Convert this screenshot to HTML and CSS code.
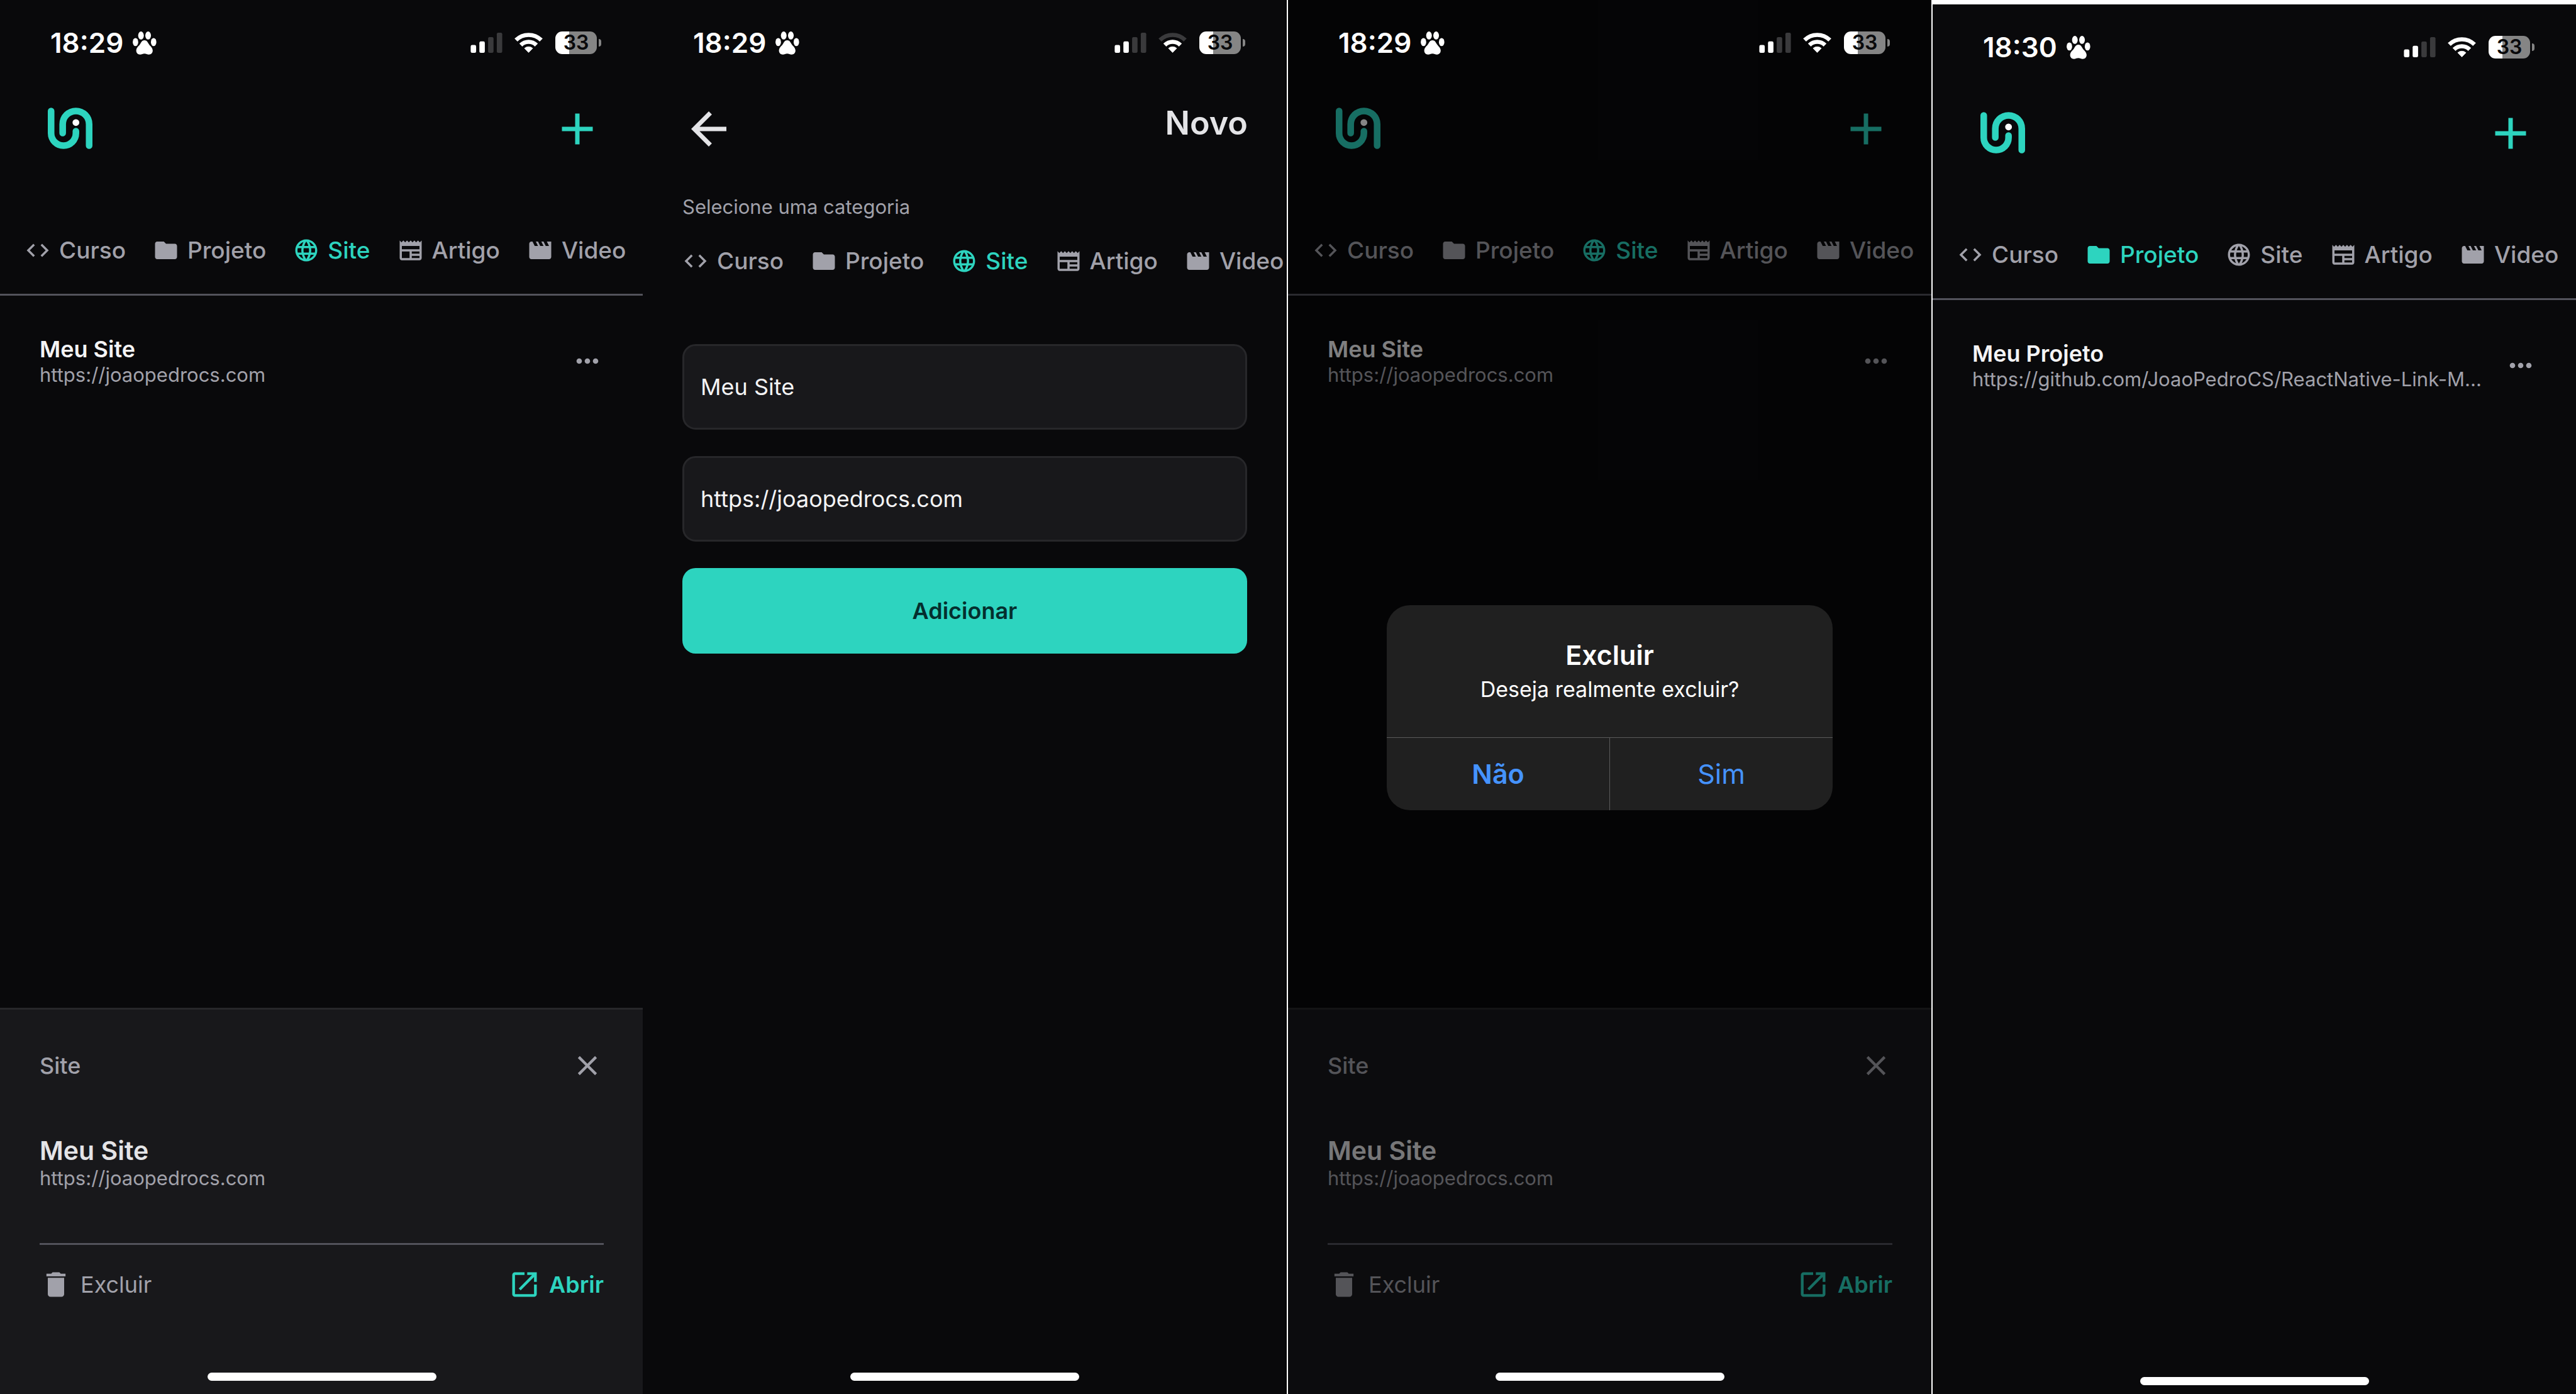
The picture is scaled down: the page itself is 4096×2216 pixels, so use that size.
FILE: index.html
```html
<!DOCTYPE html>
<html lang="pt-BR">
<head>
<meta charset="utf-8">
<meta name="viewport" content="width=device-width, initial-scale=1">
<title>Links</title>
<link rel="stylesheet" href="styles.css">
</head>
<body>
<svg class="sprite" aria-hidden="true">
  <symbol id="paw" viewBox="489 82 130 127">
    <ellipse cx="504" cy="140" rx="15" ry="22"/>
    <ellipse cx="534" cy="104" rx="15.5" ry="22"/>
    <ellipse cx="573" cy="104" rx="15.5" ry="22"/>
    <ellipse cx="603" cy="140" rx="15" ry="22"/>
    <path d="M553 130c-12 0-18 10-23 20-5 10-21 18-22 36 0 14 9 22 21 22 9 0 15-5 24-5s15 5 24 5c12 0 21-8 21-22-1-18-17-26-22-36-5-10-11-20-23-20z"/>
  </symbol>
  <symbol id="signal" viewBox="0 0 174 111">
    <rect y="68" width="30" height="43" rx="8"/>
    <rect x="48" y="48" width="30" height="63" rx="8"/>
    <rect x="96" y="24" width="30" height="87" rx="8" fill="#3a3a3c"/>
    <rect x="144" width="30" height="111" rx="8" fill="#3a3a3c"/>
  </symbol>
  <symbol id="wifi-inner" viewBox="348 87 153 111">
    <path d="M381.500 155A61 61 0 0 1 467.500 155" fill="none" stroke="currentColor" stroke-width="23"/>
    <path d="M424.500 196L402 173A34 34 0 0 1 447 173z" stroke="currentColor" stroke-width="3" stroke-linejoin="round"/>
  </symbol>
  <symbol id="wifi-outer" viewBox="348 87 153 111">
    <path d="M355 127.500A99 99 0 0 1 494 127.500" fill="none" stroke="currentColor" stroke-width="23"/>
  </symbol>
  <symbol id="logo" viewBox="81 75 243 225">
    <g fill="none" stroke="#2dd4bf" stroke-width="36" stroke-linecap="round">
      <path d="M99 93V214A67.500 67.500 0 0 0 234 214V203"/>
      <path d="M162 213V165A72 72 0 0 1 306 165V282"/>
    </g>
    <circle cx="234" cy="156" r="18.500" fill="#fff"/>
  </symbol>
  <symbol id="add" viewBox="0 0 24 24"><path d="M19 13h-6v6h-2v-6H5v-2h6V5h2v6h6v2z"/></symbol>
  <symbol id="back" viewBox="0 0 24 24"><path d="M20 11H7.830l5.590-5.590L12 4l-8 8 8 8 1.410-1.410L7.830 13H20v-2z"/></symbol>
  <symbol id="close" viewBox="0 0 24 24"><path d="M19 6.410L17.590 5 12 10.590 6.410 5 5 6.410 10.590 12 5 17.590 6.410 19 12 13.410 17.590 19 19 17.590 13.410 12z"/></symbol>
  <symbol id="more" viewBox="0 0 24 24"><path d="M6 10c-1.100 0-2 .9-2 2s.9 2 2 2 2-.9 2-2-.9-2-2-2zm12 0c-1.100 0-2 .9-2 2s.9 2 2 2 2-.9 2-2-.9-2-2-2zm-6 0c-1.100 0-2 .9-2 2s.9 2 2 2 2-.9 2-2-.9-2-2-2z"/></symbol>
  <symbol id="code" viewBox="0 0 24 24"><path d="M9.400 16.600L4.800 12l4.600-4.600L8 6l-6 6 6 6 1.400-1.400zm5.200 0l4.600-4.600-4.600-4.600L16 6l6 6-6 6-1.400-1.400z"/></symbol>
  <symbol id="folder" viewBox="0 0 24 24"><path d="M10 4H4c-1.100 0-1.990.9-1.990 2L2 18c0 1.100.9 2 2 2h16c1.100 0 2-.9 2-2V8c0-1.100-.9-2-2-2h-8l-2-2z"/></symbol>
  <symbol id="globe" viewBox="0 0 24 24"><path d="M11.990 2C6.470 2 2 6.480 2 12s4.470 10 9.990 10C17.520 22 22 17.520 22 12S17.520 2 11.990 2zm6.930 6h-2.950c-.32-1.250-.78-2.450-1.380-3.560 1.840.63 3.370 1.910 4.330 3.560zM12 4.040c.83 1.200 1.480 2.530 1.910 3.960h-3.820c.43-1.430 1.080-2.760 1.910-3.960zM4.260 14C4.100 13.360 4 12.690 4 12s.1-1.360.26-2h3.380c-.08.66-.14 1.320-.14 2 0 .68.06 1.340.14 2H4.260zm.82 2h2.950c.32 1.250.78 2.450 1.380 3.560-1.840-.63-3.370-1.900-4.330-3.560zm2.950-8H5.080c.96-1.660 2.490-2.930 4.330-3.560C8.810 5.550 8.350 6.750 8.030 8zM12 19.960c-.83-1.200-1.480-2.530-1.910-3.960h3.820c-.43 1.430-1.080 2.760-1.910 3.960zM14.340 14H9.660c-.09-.66-.16-1.320-.16-2 0-.68.07-1.350.16-2h4.680c.09.65.16 1.320.16 2 0 .68-.07 1.340-.16 2zm.25 5.560c.6-1.110 1.060-2.310 1.380-3.560h2.950c-.96 1.650-2.490 2.930-4.330 3.560zM16.360 14c.08-.66.14-1.320.14-2 0-.68-.06-1.340-.14-2h3.380c.16.64.26 1.310.26 2s-.1 1.360-.26 2h-3.380z"/></symbol>
  <symbol id="news" viewBox="0 0 24 24"><path d="M22 3l-1.670 1.670L18.670 3 17 4.670 15.330 3l-1.660 1.670L12 3l-1.670 1.670L8.670 3 7 4.670 5.330 3 3.670 4.670 2 3v16c0 1.100.9 2 2 2h16c1.100 0 2-.9 2-2V3zM11 19H4v-6h7v6zm9 0h-7v-2h7v2zm0-4h-7v-2h7v2zm0-4H4V8h16v3z"/></symbol>
  <symbol id="movie" viewBox="0 0 24 24"><path d="M18 4l2 4h-3l-2-4h-2l2 4h-3l-2-4H8l2 4H7L5 4H4c-1.100 0-1.990.9-1.990 2L2 18c0 1.100.9 2 2 2h16c1.100 0 2-.9 2-2V4h-4z"/></symbol>
  <symbol id="trash" viewBox="0 0 24 24"><path d="M6 19c0 1.100.9 2 2 2h8c1.100 0 2-.9 2-2V7H6v12zM19 4h-3.500l-1-1h-5l-1 1H5v2h14V4z"/></symbol>
  <symbol id="launch" viewBox="0 0 24 24"><path d="M19 19H5V5h7V3H5c-1.110 0-2 .9-2 2v14c0 1.100.89 2 2 2h14c1.100 0 2-.9 2-2v-7h-2v7zM14 3v2h3.590l-9.830 9.830 1.410 1.410L19 6.410V10h2V3h-7z"/></symbol>
</svg>

<main class="screens">
  <section class="screen">
    <div class="status">
      <time class="clock">18:29</time>
      <svg class="paw"><use href="#paw"/></svg>
      <svg class="signal"><use href="#signal"/></svg>
      <svg class="wifi"><use href="#wifi-inner"/><use href="#wifi-outer"/></svg>
      <span class="battery">33</span>
    </div>
    <header class="header">
      <svg class="logo"><use href="#logo"/></svg>
      <button class="icon-button accent" aria-label="Novo"><svg class="icon-large"><use href="#add"/></svg></button>
    </header>
    <nav class="tabs tabs-ruled">
      <button class="tab"><svg class="icon-small"><use href="#code"/></svg>Curso</button>
      <button class="tab"><svg class="icon-small"><use href="#folder"/></svg>Projeto</button>
      <button class="tab accent"><svg class="icon-small"><use href="#globe"/></svg>Site</button>
      <button class="tab"><svg class="icon-small"><use href="#news"/></svg>Artigo</button>
      <button class="tab"><svg class="icon-small"><use href="#movie"/></svg>Video</button>
    </nav>
    <article class="link">
      <div class="link-text">
        <h2 class="link-name">Meu Site</h2>
        <p class="link-url">https://joaopedrocs.com</p>
      </div>
      <button class="icon-button" aria-label="Mais"><svg class="icon"><use href="#more"/></svg></button>
    </article>
    <aside class="sheet">
      <div class="sheet-head">
        <span class="sheet-category">Site</span>
        <button class="icon-button" aria-label="Fechar"><svg class="icon"><use href="#close"/></svg></button>
      </div>
      <h2 class="sheet-name">Meu Site</h2>
      <p class="link-url">https://joaopedrocs.com</p>
      <div class="sheet-actions">
        <button class="action"><svg class="icon"><use href="#trash"/></svg>Excluir</button>
        <button class="action action-open accent"><svg class="icon"><use href="#launch"/></svg>Abrir</button>
      </div>
      <div class="home"></div>
    </aside>
  </section>

  <section class="screen screen-edge">
    <div class="status">
      <time class="clock">18:29</time>
      <svg class="paw"><use href="#paw"/></svg>
      <svg class="signal"><use href="#signal"/></svg>
      <svg class="wifi"><use href="#wifi-inner"/><use class="wifi-weak" href="#wifi-outer"/></svg>
      <span class="battery">33</span>
    </div>
    <header class="header header-form">
      <button class="icon-button light" aria-label="Voltar"><svg class="icon-large"><use href="#back"/></svg></button>
      <h1 class="title">Novo</h1>
    </header>
    <p class="hint">Selecione uma categoria</p>
    <nav class="tabs tabs-form">
      <button class="tab"><svg class="icon-small"><use href="#code"/></svg>Curso</button>
      <button class="tab"><svg class="icon-small"><use href="#folder"/></svg>Projeto</button>
      <button class="tab accent"><svg class="icon-small"><use href="#globe"/></svg>Site</button>
      <button class="tab"><svg class="icon-small"><use href="#news"/></svg>Artigo</button>
      <button class="tab"><svg class="icon-small"><use href="#movie"/></svg>Video</button>
    </nav>
    <form class="form">
      <input class="field" type="text" aria-label="Nome" value="Meu Site">
      <input class="field" type="text" aria-label="URL" value="https://joaopedrocs.com">
      <button class="submit" type="button">Adicionar</button>
    </form>
    <div class="home"></div>
  </section>

  <section class="screen screen-edge">
    <div class="status">
      <time class="clock">18:29</time>
      <svg class="paw"><use href="#paw"/></svg>
      <svg class="signal"><use href="#signal"/></svg>
      <svg class="wifi"><use href="#wifi-inner"/><use href="#wifi-outer"/></svg>
      <span class="battery">33</span>
    </div>
    <header class="header">
      <svg class="logo"><use href="#logo"/></svg>
      <button class="icon-button accent" aria-label="Novo"><svg class="icon-large"><use href="#add"/></svg></button>
    </header>
    <nav class="tabs tabs-ruled">
      <button class="tab"><svg class="icon-small"><use href="#code"/></svg>Curso</button>
      <button class="tab"><svg class="icon-small"><use href="#folder"/></svg>Projeto</button>
      <button class="tab accent"><svg class="icon-small"><use href="#globe"/></svg>Site</button>
      <button class="tab"><svg class="icon-small"><use href="#news"/></svg>Artigo</button>
      <button class="tab"><svg class="icon-small"><use href="#movie"/></svg>Video</button>
    </nav>
    <article class="link">
      <div class="link-text">
        <h2 class="link-name">Meu Site</h2>
        <p class="link-url">https://joaopedrocs.com</p>
      </div>
      <button class="icon-button" aria-label="Mais"><svg class="icon"><use href="#more"/></svg></button>
    </article>
    <aside class="sheet">
      <div class="sheet-head">
        <span class="sheet-category">Site</span>
        <button class="icon-button" aria-label="Fechar"><svg class="icon"><use href="#close"/></svg></button>
      </div>
      <h2 class="sheet-name">Meu Site</h2>
      <p class="link-url">https://joaopedrocs.com</p>
      <div class="sheet-actions">
        <button class="action"><svg class="icon"><use href="#trash"/></svg>Excluir</button>
        <button class="action action-open accent"><svg class="icon"><use href="#launch"/></svg>Abrir</button>
      </div>
      <div class="home"></div>
    </aside>
    <div class="overlay">
      <div class="alert" role="alertdialog" aria-labelledby="alert-title" aria-describedby="alert-text">
        <div class="alert-body">
          <h2 class="alert-title" id="alert-title">Excluir</h2>
          <p class="alert-text" id="alert-text">Deseja realmente excluir?</p>
        </div>
        <div class="alert-actions">
          <button class="alert-button alert-default">Não</button>
          <button class="alert-button">Sim</button>
        </div>
      </div>
    </div>
  </section>

  <section class="screen screen-capped">
    <div class="status">
      <time class="clock">18:30</time>
      <svg class="paw"><use href="#paw"/></svg>
      <svg class="signal"><use href="#signal"/></svg>
      <svg class="wifi"><use href="#wifi-inner"/><use href="#wifi-outer"/></svg>
      <span class="battery">33</span>
    </div>
    <header class="header">
      <svg class="logo"><use href="#logo"/></svg>
      <button class="icon-button accent" aria-label="Novo"><svg class="icon-large"><use href="#add"/></svg></button>
    </header>
    <nav class="tabs tabs-ruled">
      <button class="tab"><svg class="icon-small"><use href="#code"/></svg>Curso</button>
      <button class="tab accent"><svg class="icon-small"><use href="#folder"/></svg>Projeto</button>
      <button class="tab"><svg class="icon-small"><use href="#globe"/></svg>Site</button>
      <button class="tab"><svg class="icon-small"><use href="#news"/></svg>Artigo</button>
      <button class="tab"><svg class="icon-small"><use href="#movie"/></svg>Video</button>
    </nav>
    <article class="link">
      <div class="link-text">
        <h2 class="link-name">Meu Projeto</h2>
        <p class="link-url">https://github.com/JoaoPedroCS/ReactNative-Link-M...</p>
      </div>
      <button class="icon-button" aria-label="Mais"><svg class="icon"><use href="#more"/></svg></button>
    </article>
    <div class="home"></div>
  </section>
</main>
</body>
</html>
```
FILE: styles.css
```css
* {
  box-sizing: border-box;
  margin: 0;
}

body {
  background: #09090b;
  color: #a1a1aa;
  font-family: Inter, "Liberation Sans", sans-serif;
}

button {
  padding: 0;
  border: 0;
  background: none;
  color: inherit;
  font: inherit;
}

svg {
  display: block;
  flex: none;
  fill: currentColor;
}

.sprite {
  position: absolute;
  width: 0;
  height: 0;
}

.screens {
  display: grid;
  grid-template-columns: 1022fr 1026fr 1025fr 1023fr;
  min-height: 100vh;
}

.screen {
  position: relative;
  display: flex;
  flex-direction: column;
  min-width: 0;
  overflow: hidden;
}

.screen-edge {
  border-right: 2px solid #fff;
}

.screen-capped {
  border-top: 7px solid #fff;
}

/* Status bar */
.status {
  position: relative;
  z-index: 2;
  display: flex;
  align-items: center;
  height: 136px;
  padding: 0 73px 0 80px;
  color: #fff;
}

.clock {
  font-size: 44px;
  line-height: 54px;
  font-weight: 600;
}

.paw {
  width: 38px;
  height: 37px;
  margin-left: 15px;
}

.signal {
  width: 51px;
  height: 32px;
  margin-left: auto;
}

.wifi {
  width: 45px;
  height: 32px;
  margin: 0 20px 0 19px;
}

.wifi-weak {
  color: #3a3a3c;
}

.battery {
  position: relative;
  width: 66px;
  border-radius: 11px;
  background: linear-gradient(90deg, #fff 33%, #858585 33%);
  color: #09090b;
  font-size: 32px;
  line-height: 36px;
  font-weight: 600;
  text-align: center;
}

.battery::after {
  content: "";
  position: absolute;
  top: 12px;
  left: 69px;
  width: 4px;
  height: 12px;
  border-radius: 0 6px 6px 0;
  background: #858585;
}

/* Header */
.header {
  display: flex;
  align-items: center;
  justify-content: space-between;
  margin-top: 27px;
  padding: 0 62px 0 63px;
}

.header-form {
  align-items: flex-start;
}

.logo {
  width: 71px;
  height: 66px;
  margin: 0 0 3px 13px;
}

.icon-large {
  width: 84px;
  height: 84px;
}

.icon {
  width: 52px;
  height: 52px;
}

.icon-small {
  width: 42px;
  height: 42px;
}

.icon-button.light,
.title {
  color: #e4e4e7;
}

.title {
  font-size: 52px;
  line-height: 66px;
  font-weight: 600;
}

/* Categories */
.hint {
  margin-top: 63px;
  padding-left: 63px;
  font-size: 31px;
  line-height: 38px;
}

.tabs {
  display: flex;
  gap: 43px;
}

.tabs-ruled {
  margin-top: 130px;
  padding: 0 0 48px 39px;
  border-bottom: 3px solid #52525b;
}

.tabs-form {
  margin-top: 46px;
  padding-left: 63px;
}

.tab {
  display: flex;
  flex: none;
  gap: 13px;
  font-size: 37px;
  line-height: 42px;
  font-weight: 500;
}

.tab.accent,
.icon-button.accent,
.action.accent {
  color: #2dd4bf;
}

/* Links */
.link {
  display: flex;
  align-items: center;
  justify-content: space-between;
  padding: 63px 62px 0 63px;
}

.link-name {
  color: #f4f4f5;
  font-size: 36px;
  line-height: 44px;
  font-weight: 600;
}

.link-url {
  font-size: 31px;
  line-height: 38px;
}

/* Form */
.form {
  display: grid;
  gap: 42px;
  margin-top: 111px;
  padding: 0 63px;
}

.field,
.submit {
  width: 100%;
  height: 136px;
  border-radius: 21px;
  font-family: inherit;
  font-size: 36px;
}

.field {
  padding: 0 26px;
  border: 3px solid #27272a;
  background: #18181b;
  color: #f4f4f5;
}

.submit {
  background: #2dd4bf;
  color: #042f2e;
  font-weight: 600;
}

/* Bottom sheet */
.sheet {
  margin-top: auto;
  padding: 63px 62px 0 63px;
  border-top: 3px solid #27272a;
  background: #18181b;
}

.sheet-head {
  display: flex;
  align-items: center;
  justify-content: space-between;
  margin-bottom: 84px;
}

.sheet-category {
  font-size: 36px;
  line-height: 44px;
  font-weight: 500;
}

.sheet-name {
  color: #e4e4e7;
  font-size: 41px;
  line-height: 50px;
  font-weight: 600;
}

.sheet-actions {
  display: flex;
  justify-content: space-between;
  margin: 84px 0 114px;
  padding-top: 37px;
  border-top: 3px solid #52525b;
}

.action {
  display: flex;
  align-items: center;
  gap: 13px;
  font-size: 36px;
}

.action-open {
  font-weight: 600;
}

.home {
  position: relative;
  z-index: 2;
  width: 364px;
  height: 13px;
  margin: auto auto 21px;
  border-radius: 7px;
  background: #fff;
}

.screen-capped .home {
  margin-bottom: 14px;
}

/* Alert */
.overlay {
  position: absolute;
  inset: 0;
  z-index: 1;
  display: flex;
  align-items: center;
  justify-content: center;
  padding-top: 33px;
  background: rgba(0, 0, 0, .48);
}

.alert {
  width: 709px;
  border-radius: 37px;
  background: #202020;
  color: #fff;
  text-align: center;
}

.alert-body {
  padding: 52px 40px 55px;
}

.alert-title {
  margin-bottom: 7px;
  font-size: 43px;
  line-height: 54px;
  font-weight: 600;
}

.alert-text {
  font-size: 34px;
  line-height: 42px;
}

.alert-actions {
  display: flex;
  border-top: 1px solid #5a5a5a;
}

.alert-button {
  flex: 1;
  height: 115px;
  color: #4593ff;
  font-size: 43px;
}

.alert-default {
  border-right: 1px solid #5a5a5a;
  font-weight: 600;
}
```
